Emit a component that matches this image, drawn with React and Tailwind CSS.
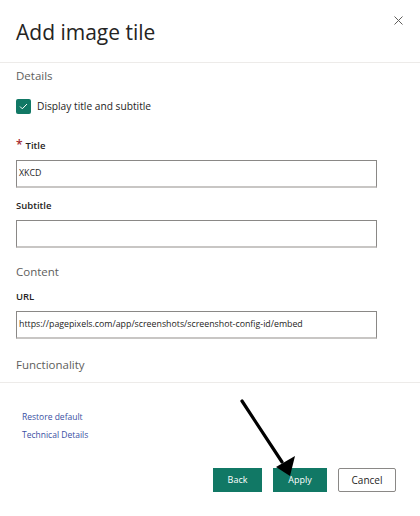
import React from "react";

/* Pointer arrow drawn over the footer (annotation) */
function PointerArrow() {
  return (
    <svg
      className="absolute left-0 top-0 pointer-events-none"
      width="420"
      height="516"
      viewBox="0 0 420 516"
    >
      <line x1="242" y1="401" x2="282" y2="462" stroke="#000" strokeWidth="3.2" strokeLinecap="round" />
      <polygon points="290,476 276,467 295,456" fill="#000" />
    </svg>
  );
}

function Field({ label, required, value }) {
  return (
    <>
      <div className="text-[9.5px] leading-[14px] font-semibold text-[#252423] flex items-start gap-[3px]">
        {required && <span className="text-[#a4262c] text-[12px] leading-[12px]">*</span>}
        <span>{label}</span>
      </div>
      <div className="mt-[7px] w-[361px] h-[28px] border border-[#8a8886] border-b-2 border-b-[#c8c6c4] flex items-center px-[2px] text-[8.8px] text-[#252423]">
        {value}
      </div>
    </>
  );
}

export default function App() {
  return (
    <div
      className="relative w-[420px] h-[516px] bg-white overflow-hidden"
      style={{ fontFamily: '"Open Sans", "Noto Sans", sans-serif' }}
    >
      {/* Header */}
      <div className="h-[63px] border-b border-[#edebe9] flex items-start justify-between pl-4 pr-[17px]">
        <h1 className="mt-[17px] text-[21px] leading-[30px] text-[#252423]">Add image tile</h1>
        <button className="mt-[15px] w-[10px] h-[10px] flex items-center justify-center text-[#605e5c]">
          <svg width="9" height="9" viewBox="0 0 9 9">
            <path d="M0.5 0.5 L8.5 8.5 M8.5 0.5 L0.5 8.5" stroke="currentColor" strokeWidth="1" />
          </svg>
        </button>
      </div>

      <div className="pl-4">
        {/* Details */}
        <div className="mt-[4px] text-[11.5px] leading-[18px] text-[#605e5c]">Details</div>
        <div className="mt-[13px] flex items-center gap-[6px]">
          <div className="w-[15px] h-[15px] rounded-[2px] bg-[#117865] flex items-center justify-center">
            <svg width="9" height="7" viewBox="0 0 9 7">
              <path d="M1 3.5 L3.3 5.8 L8 1" stroke="#fff" strokeWidth="1" fill="none" />
            </svg>
          </div>
          <span className="text-[10.2px] leading-[16px] text-[#252423]">Display title and subtitle</span>
        </div>

        <div className="mt-[25px]">
          <Field label="Title" required value="XKCD" />
        </div>
        <div className="mt-[11px]">
          <Field label="Subtitle" value="" />
        </div>

        {/* Content */}
        <div className="mt-[15px] text-[11.5px] leading-[18px] text-[#605e5c]">Content</div>
        <div className="mt-[9px]">
          <Field label="URL" value="https://pagepixels.com/app/screenshots/screenshot-config-id/embed" />
        </div>

        <div className="mt-[17px] text-[11.5px] leading-[18px] text-[#605e5c]">Functionality</div>
      </div>

      <div className="mt-[8px] border-t border-[#edebe9]" />

      {/* Links */}
      <div className="pl-[22px] mt-[27px] flex flex-col gap-[4px] text-[8.5px] leading-[14px] text-[#3a4fa3]">
        <span>Restore default</span>
        <span>Technical Details</span>
      </div>

      {/* Footer buttons */}
      <div className="mt-[26px] flex justify-end items-center gap-[11px] pr-[24px]">
        <button className="w-[49px] h-[24px] bg-[#117865] text-white text-[9px]">Back</button>
        <button className="w-[54px] h-[24px] bg-[#117865] text-white text-[9px]">Apply</button>
        <button className="w-[58px] h-[24px] border border-[#8a8886] rounded-[2px] bg-white text-[#252423] text-[10px]">
          Cancel
        </button>
      </div>

      <PointerArrow />
    </div>
  );
}
